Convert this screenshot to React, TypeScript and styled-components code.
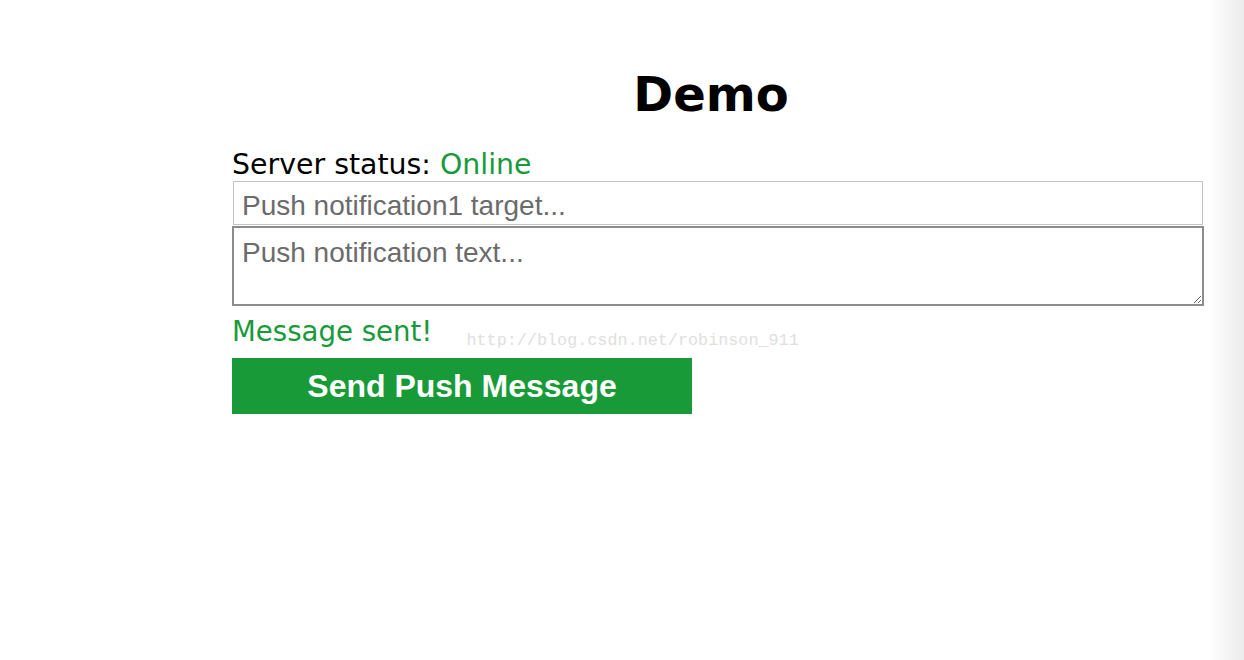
import React, { useState } from "react";
import styled, { createGlobalStyle } from "styled-components";

const GlobalStyle = createGlobalStyle`
  html, body {
    margin: 0;
    padding: 0;
    background: #ffffff;
  }
  body {
    font-family: "DejaVu Sans", Verdana, sans-serif;
  }
`;

const Page = styled.div`
  display: flex;
  min-height: 660px;
  width: 1244px;
`;

const Main = styled.main`
  flex: 1;
  padding: 66px 0 0 232px;
`;

const EdgeShade = styled.div`
  width: 36px;
  background: linear-gradient(to right, #ffffff 0%, #f6f6f6 50%, #ebebeb 100%);
`;

const Container = styled.div`
  width: 958px;
  display: flex;
  flex-direction: column;
`;

const Title = styled.h1`
  margin: 0;
  font-family: "DejaVu Sans", Verdana, sans-serif;
  font-size: 48px;
  font-weight: bold;
  line-height: 56px;
  text-align: center;
  color: #000;
`;

const StatusLine = styled.div`
  margin-top: 27px;
  font-size: 28.4px;
  line-height: 32px;
  color: #000;
`;

const Green = styled.span`
  color: #189a3a;
`;

const TargetInput = styled.input`
  box-sizing: border-box;
  width: 970px;
  height: 44px;
  margin: 0 0 1px 1px;
  padding: 5px 8px 0;
  border: 1px solid #c4c4c4;
  font-family: "Liberation Sans", Arial, sans-serif;
  font-size: 28px;
  color: #333;
  outline: none;
  &::placeholder {
    color: #6b6b6b;
  }
`;

const TextInput = styled.textarea`
  box-sizing: border-box;
  width: 972px;
  height: 80px;
  margin: 0;
  padding: 9px 8px 4px;
  border: 2px solid #8c8c8c;
  font-family: "Liberation Sans", Arial, sans-serif;
  font-size: 28px;
  line-height: 32px;
  color: #333;
  outline: none;
  display: block;
  &::placeholder {
    color: #6b6b6b;
  }
`;

const StatusRow = styled.div`
  margin-top: 10px;
  display: flex;
  align-items: flex-end;
`;

const SentText = styled.span`
  font-size: 27.6px;
  line-height: 32px;
  color: #189a3a;
`;

const Watermark = styled.span`
  margin-left: 34px;
  font-family: "Liberation Mono", "Courier New", monospace;
  font-size: 16.8px;
  line-height: 20px;
  color: #e0e0e0;
  margin-bottom: -3px;
`;

const SendButton = styled.button`
  margin-top: 10px;
  width: 460px;
  height: 56px;
  border: none;
  background: #179a37;
  color: #fff;
  font-family: "Liberation Sans", Arial, sans-serif;
  font-size: 32px;
  font-weight: bold;
  cursor: pointer;
  padding: 0;
`;

export default function App() {
  const [target, setTarget] = useState("");
  const [text, setText] = useState("");

  return (
    <>
      <GlobalStyle />
      <Page>
        <Main>
          <Container>
            <Title>Demo</Title>
            <StatusLine>
              Server status: <Green>Online</Green>
            </StatusLine>
            <TargetInput
              placeholder="Push notification1 target..."
              value={target}
              onChange={(e) => setTarget(e.target.value)}
            />
            <TextInput
              placeholder="Push notification text..."
              value={text}
              onChange={(e) => setText(e.target.value)}
            />
            <StatusRow>
              <SentText>Message sent!</SentText>
              <Watermark>http://blog.csdn.net/robinson_911</Watermark>
            </StatusRow>
            <div>
              <SendButton type="button">Send Push Message</SendButton>
            </div>
          </Container>
        </Main>
        <EdgeShade />
      </Page>
    </>
  );
}
